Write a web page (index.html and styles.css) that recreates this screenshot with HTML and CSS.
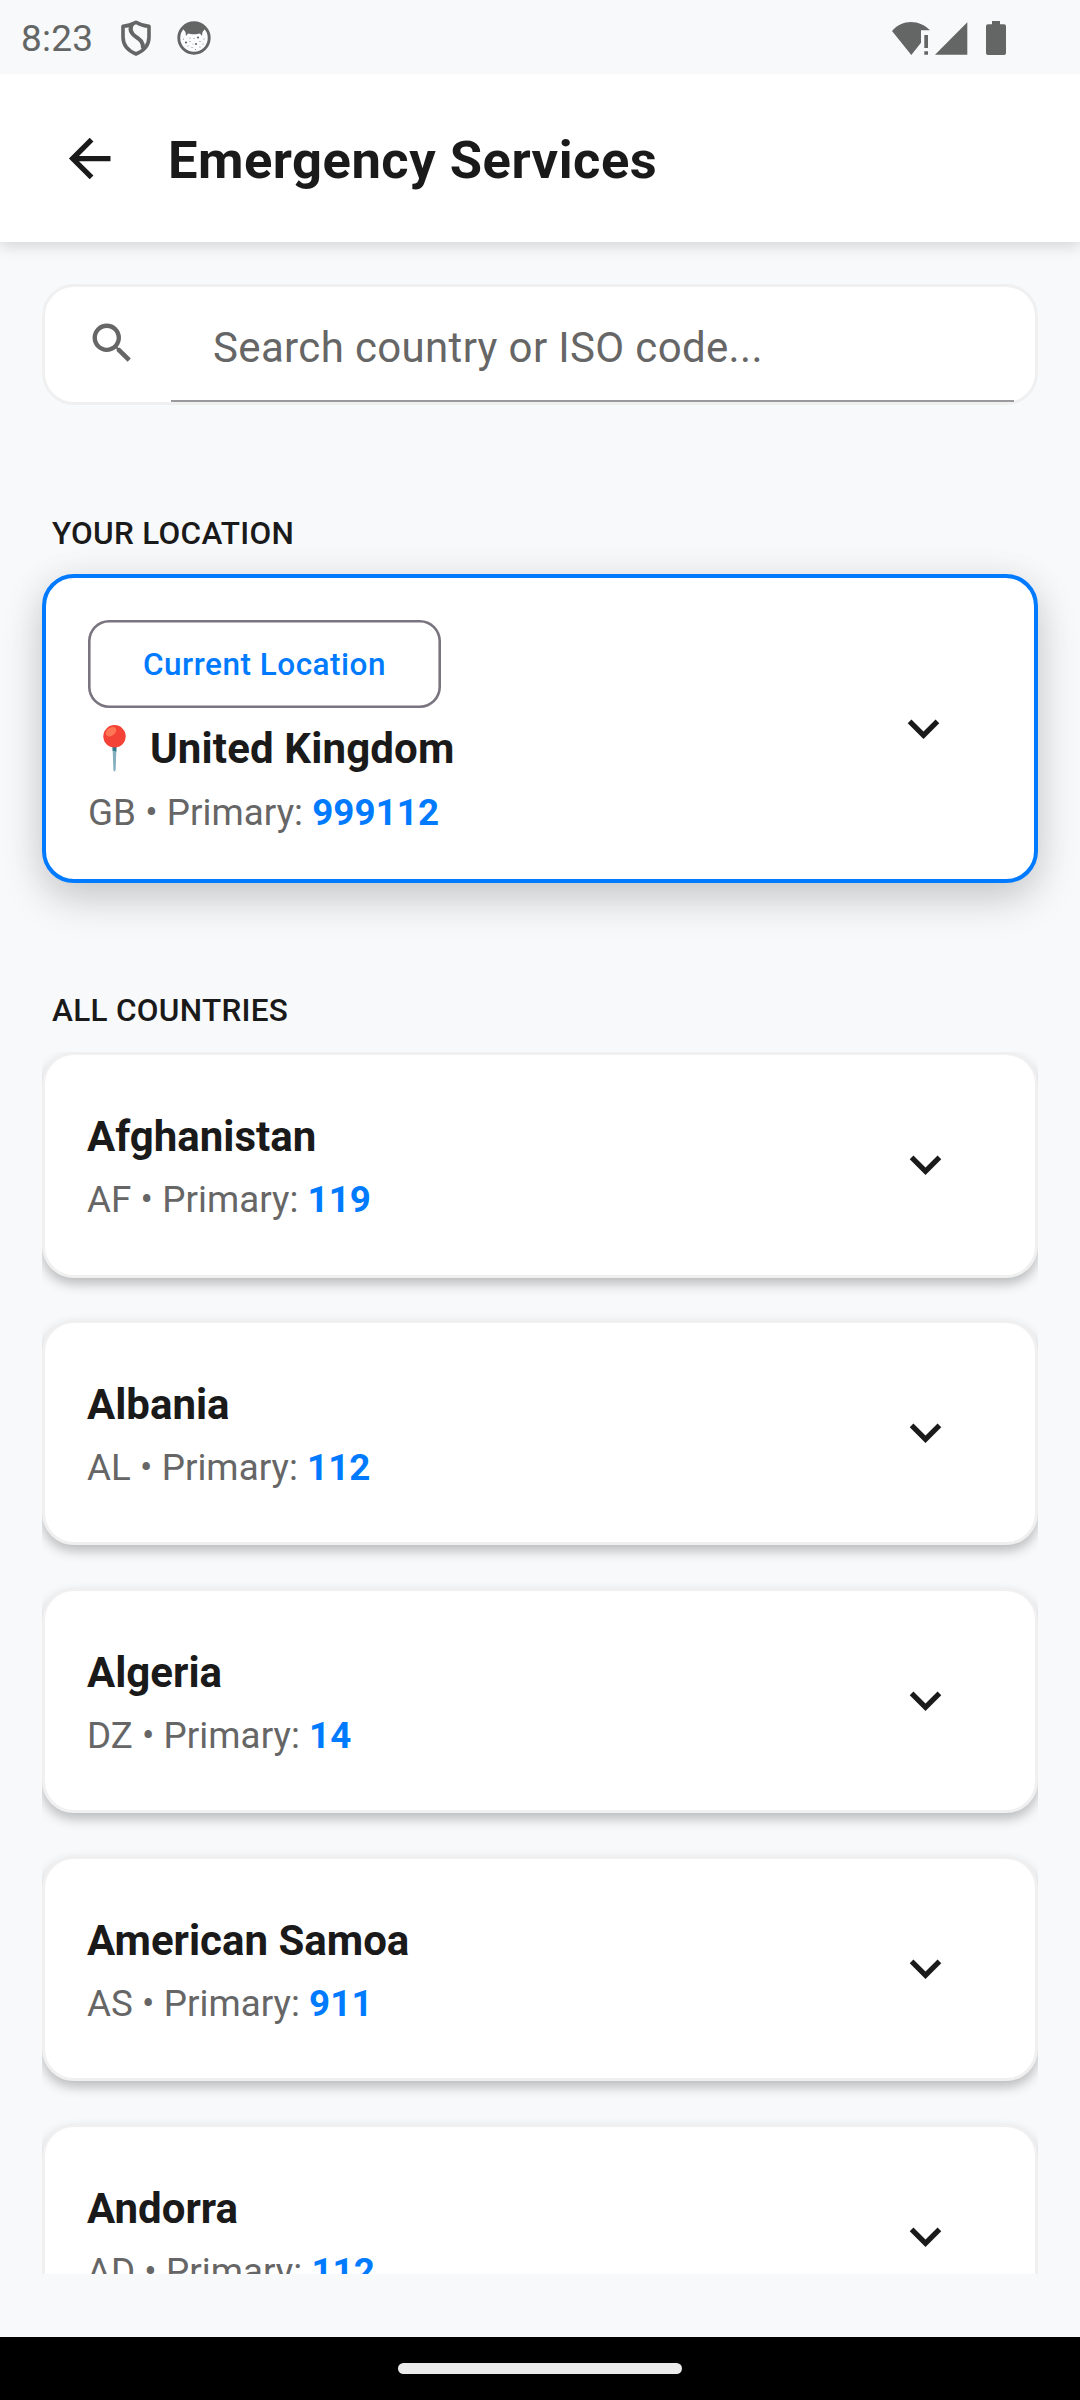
FILE: index.html
```html
<!DOCTYPE html>
<html lang="en">
<head>
<meta charset="utf-8">
<title>Emergency Services</title>
<link rel="stylesheet" href="styles.css">
</head>
<body>
<svg class="defs" aria-hidden="true">
  <symbol id="chevron" viewBox="0 0 24 24"><path d="M7.41,8.58L12,13.17L16.59,8.58L18,10L12,16L6,10L7.41,8.58Z"/></symbol>
</svg>
<div class="screen">
  <div class="status">
    <span class="clock">8:23</span>
    <svg class="shield" viewBox="0 0 30 36"><path d="M15 2.200C19 4.600 23.500 6 28 6.300V17C28 24.500 23.500 30.500 15 34C6.500 30.500 2 24.500 2 17V6.300C6.500 6 11 4.600 15 2.200Z" fill="none" stroke="currentColor" stroke-width="3.600" stroke-linejoin="round"/><path d="M11.500 3.500C7.500 9 10.500 13.500 14.500 16.500C19.500 20 22.500 22 22 28.500" fill="none" stroke="currentColor" stroke-width="4"/></svg>
    <svg class="face" viewBox="0 0 34 34"><circle cx="17" cy="17" r="15.200" fill="#fbfcfd" stroke="currentColor" stroke-width="2.900"/><path d="M6 8C9 4 13 2 17 2S25 4 28 8L25.500 11L25 15L23 12.500C20 13.500 14 13.500 11 12.500L9 15L8.500 11Z" fill="currentColor"/><g fill="currentColor"><circle cx="9" cy="21.500" r="1.100"/><circle cx="21" cy="16.500" r="1.100"/><circle cx="19" cy="23" r="1.100"/><circle cx="13" cy="17" r=".5"/><circle cx="17" cy="17.500" r=".5"/><circle cx="6.500" cy="18" r=".5"/><circle cx="13" cy="20.500" r=".5"/><circle cx="23" cy="20.500" r=".5"/><circle cx="27" cy="18" r=".5"/><circle cx="11" cy="25" r=".5"/><circle cx="15" cy="26.500" r=".5"/><circle cx="23" cy="26" r=".5"/><circle cx="18.500" cy="28.500" r=".5"/><circle cx="26" cy="23" r=".5"/><circle cx="16" cy="23" r=".4"/></g></svg>
    <div class="system">
      <svg class="wifi" viewBox="0 0 38 33"><path d="M0 9C5 3 12 0 19 0S33 3 38 8.300H29V20.700L19.300 33Z"/><path d="M32.300 13H36V26H32.300ZM32.300 29.300H36V32.700H32.300Z"/></svg>
      <svg class="signal" viewBox="0 0 33 33"><path d="M32.300 .3V32.700H0Z"/></svg>
      <svg class="battery" viewBox="0 0 20 34"><path d="M6 0H14V3.300H18Q20 3.300 20 5.300V32Q20 34 18 34H2Q0 34 0 32V5.300Q0 3.300 2 3.300H6Z"/></svg>
    </div>
  </div>

  <header class="header">
    <svg class="back" viewBox="0 0 24 24"><path d="M20,11V13H8L13.500,18.500L12.080,19.920L4.160,12L12.080,4.080L13.500,5.500L8,11H20Z"/></svg>
    <h1 class="title">Emergency Services</h1>
  </header>

  <main class="content">
    <div class="search">
      <svg class="search-icon" viewBox="0 0 24 24"><path d="M9.500,3A6.500,6.500 0 0,1 16,9.500C16,11.110 15.410,12.590 14.440,13.730L14.710,14H15.500L20.500,19L19,20.500L14,15.500V14.710L13.730,14.440C12.590,15.410 11.110,16 9.500,16A6.500,6.500 0 0,1 3,9.500A6.500,6.500 0 0,1 9.500,3M9.500,5C7,5 5,7 5,9.500C5,12 7,14 9.500,14C12,14 14,12 14,9.500C14,7 12,5 9.500,5Z"/></svg>
      <div class="search-field">Search country or ISO code...</div>
    </div>

    <h2 class="label label-location">YOUR LOCATION</h2>
    <section class="card current">
      <div class="info">
        <span class="chip">Current Location</span>
        <div class="name"><svg class="pin" viewBox="0 0 23 47"><path d="M9.500 20H13.500L12.600 45Q11.500 48 10.400 45Z" fill="#82aebd"/><path d="M9.500 20H13.500L13.300 27Q11.500 25 9.600 26Z" fill="#2f7889"/><circle cx="11.500" cy="11.300" r="11.200" fill="#f44336"/><ellipse cx="8" cy="6.700" rx="5.800" ry="4" transform="rotate(-38 8 6.700)" fill="#ff7555"/></svg>United Kingdom</div>
        <div class="detail">GB • Primary: <b>999112</b></div>
      </div>
      <svg class="chevron"><use href="#chevron"/></svg>
    </section>

    <h2 class="label label-all">ALL COUNTRIES</h2>
    <div class="list">
      <section class="card country"><div class="info"><div class="name">Afghanistan</div><div class="detail">AF • Primary: <b>119</b></div></div><svg class="chevron"><use href="#chevron"/></svg></section>
      <section class="card country"><div class="info"><div class="name">Albania</div><div class="detail">AL • Primary: <b>112</b></div></div><svg class="chevron"><use href="#chevron"/></svg></section>
      <section class="card country"><div class="info"><div class="name">Algeria</div><div class="detail">DZ • Primary: <b>14</b></div></div><svg class="chevron"><use href="#chevron"/></svg></section>
      <section class="card country"><div class="info"><div class="name">American Samoa</div><div class="detail">AS • Primary: <b>911</b></div></div><svg class="chevron"><use href="#chevron"/></svg></section>
      <section class="card country"><div class="info"><div class="name">Andorra</div><div class="detail">AD • Primary: <b>112</b></div></div><svg class="chevron"><use href="#chevron"/></svg></section>
    </div>
  </main>
  <div class="navbar"><div class="handle"></div></div>
</div>
</body>
</html>
```
FILE: styles.css
```css
* { box-sizing: border-box; }
body {
  margin: 0;
  background: #f8f9fb;
  color: #1a1a1a;
  font-family: Roboto, "Liberation Sans", sans-serif;
}
h1, h2 { margin: 0; }
svg { display: block; flex: none; fill: currentColor; }
.defs { display: none; }
.screen {
  width: 1080px;
  height: 2400px;
  display: flex;
  flex-direction: column;
  overflow: hidden;
}

/* Status bar */
.status {
  flex: none;
  height: 74px;
  padding: 2px 74px 0 21px;
  display: flex;
  align-items: center;
  color: #646665;
}
.clock { width: 100px; padding-top: 2px; font-size: 37px; line-height: 44px; letter-spacing: .2px; }
.shield { width: 30px; height: 36px; }
.face { width: 34px; height: 34px; margin-left: 26px; }
.system { margin-left: auto; display: flex; align-items: center; }
.wifi { width: 38px; height: 33px; }
.signal { width: 33px; height: 33px; margin-left: 5px; }
.battery { width: 20px; height: 34px; margin-left: 18px; }

/* App bar */
.header {
  flex: none;
  height: 168px;
  padding-left: 58px;
  display: flex;
  align-items: center;
  gap: 47px;
  background: #fff;
  box-shadow: 0 4px 14px rgba(0, 0, 0, .15);
  clip-path: inset(0 0 -40px 0);
}
.back { width: 63px; height: 63px; }
.title { padding-top: 4px; font-size: 52.5px; line-height: 64px; font-weight: 700; letter-spacing: .5px; }

.content {
  flex: none;
  height: 2032px;
  padding: 42px 42px 0;
  display: flex;
  flex-direction: column;
}

/* Search */
.search {
  flex: none;
  height: 121px;
  border: 3px solid #f0f0f0;
  border-radius: 32px;
  background: #fff;
  display: flex;
  padding: 0 21px 0 41px;
}
.search-icon { width: 52.5px; height: 52.5px; margin-top: 29.500px; color: #666; }
.search-field {
  flex: 1;
  margin-left: 32.500px;
  height: 115px;
  padding: 6px 0 0 42px;
  border-bottom: 2px solid #9a999e;
  color: #666;
  font-size: 42px;
  line-height: 109px;
  letter-spacing: .35px;
}

.label {
  padding-left: 10px;
  font-size: 31.500px;
  line-height: 42px;
  font-weight: 500;
  letter-spacing: .3px;
}
.label-location { margin: 108px 0 19px; }
.label-all { margin: 107px 0 20px; }

/* Cards */
.card {
  flex: none;
  display: flex;
  align-items: center;
  justify-content: space-between;
  background: #fff;
  border-radius: 32px;
}
.current {
  height: 309px;
  border: 4px solid #007bff;
  padding: 0 79px 0 42px;
  box-shadow: 0 16px 42px rgba(0, 0, 0, .18), 0 2px 40px rgba(0, 0, 0, .05);
}
.country {
  height: 225.500px;
  border: 3px solid #f0f0f0;
  padding: 0 78px 0 42px;
  box-shadow: 0 6px 12px rgba(0, 0, 0, .25);
}
.list {
  flex: 1;
  min-height: 0;
  overflow: hidden;
  display: flex;
  flex-direction: column;
  gap: 42.400px;
}
.info { padding-top: 6px; }
.chip {
  display: block;
  width: 353px;
  height: 88px;
  border-radius: 21px;
  box-shadow: inset 0 0 0 2.600px #79747e;
  color: #007bff;
  font-size: 31.500px;
  line-height: 89px;
  font-weight: 500;
  letter-spacing: .5px;
  text-align: center;
}
.name {
  display: flex;
  align-items: center;
  font-size: 42px;
  line-height: 63px;
  font-weight: 700;
}
.current .name { margin: 9px 0 1px; letter-spacing: .15px; }
.pin { width: 23px; height: 47px; margin: 0 24px 0 15px; }
.detail { margin-top: 2.300px; font-size: 36.750px; line-height: 60px; color: #666; letter-spacing: .05px; }
.detail b { font-weight: 700; color: #007bff; }
.chevron { width: 63px; height: 63px; }

/* Gesture bar */
.navbar {
  flex: none;
  height: 63px;
  margin-top: 63px;
  background: #000;
  display: flex;
  align-items: center;
  justify-content: center;
}
.handle { width: 284px; height: 11px; border-radius: 6px; background: #ebebeb; }
```
